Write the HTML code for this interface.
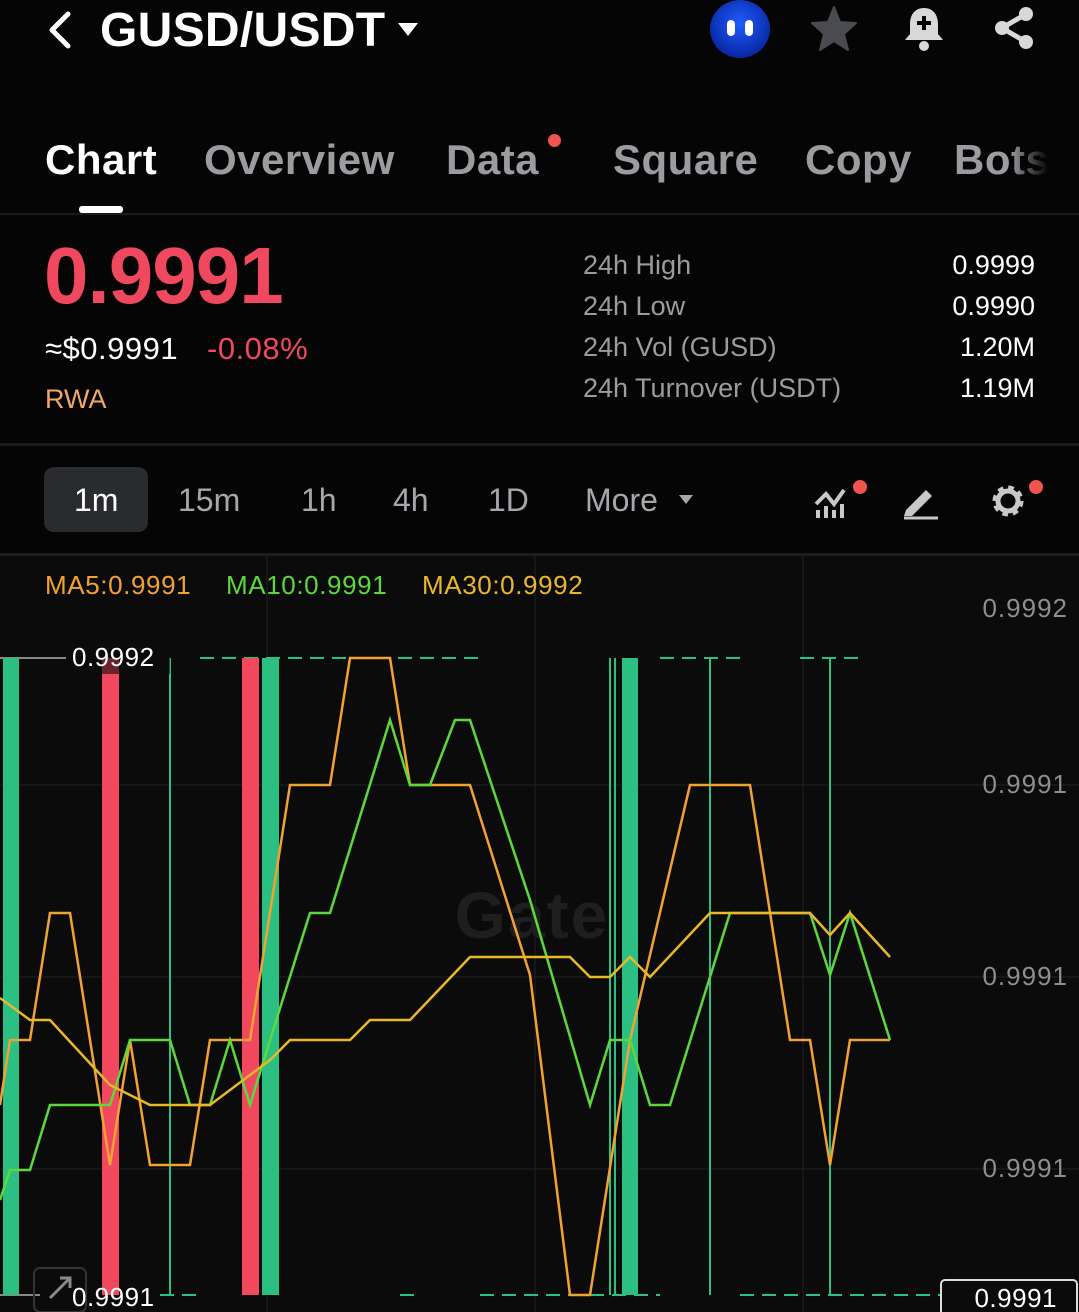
<!DOCTYPE html>
<html><head><meta charset="utf-8">
<style>
*{margin:0;padding:0;box-sizing:border-box}
body{width:1079px;height:1312px;background:#0b0b0b;font-family:"Liberation Sans",sans-serif;color:#fff;position:relative;overflow:hidden}
.a{position:absolute;white-space:nowrap}
.tab{font-size:42px;font-weight:bold;color:#9a9ca0;top:136px;letter-spacing:0.5px}
.stl{font-size:27px;color:#9a9ca0;left:583px}
.stv{font-size:27px;color:#fff;right:44px;text-align:right}
.tf{font-size:32px;color:#a5a7ab;top:482px}
</style></head><body>
<div style="position:absolute;left:0;top:0;width:1079px;height:555px;background:#050505"></div>
<svg class="a" style="left:44px;top:10px" width="30" height="40"><path d="M24 4 L8 20 L24 36" stroke="#fff" stroke-width="5" fill="none" stroke-linecap="round" stroke-linejoin="round"/></svg>
<div class="a" style="left:100px;top:3px;font-size:48px;font-weight:bold;letter-spacing:0.3px">GUSD/USDT</div>
<svg class="a" style="left:397px;top:22px" width="22" height="16"><path d="M1 1 L21 1 L11 14Z" fill="#fff"/></svg>
<div class="a" style="left:710px;top:0;width:60px;height:58px;border-radius:50%;background:radial-gradient(circle at 50% 40%,#1f5cff,#0a2aa8 70%,#0a1a60)"></div>
<div class="a" style="left:727px;top:20px;width:8px;height:16px;border-radius:4px;background:#fff"></div>
<div class="a" style="left:745px;top:20px;width:8px;height:16px;border-radius:4px;background:#fff"></div>
<svg class="a" style="left:810px;top:5px" width="48" height="46"><path d="M24 2 L30 17 L46 18 L34 29 L38 45 L24 36 L10 45 L14 29 L2 18 L18 17Z" fill="#4a4b50" stroke="#4a4b50" stroke-width="2" stroke-linejoin="round"/></svg>
<svg class="a" style="left:902px;top:4px" width="44" height="48"><path d="M22 4 C12 4 8 12 8 20 L8 30 L3 36 L41 36 L36 30 L36 20 C36 12 32 4 22 4Z" fill="#d8d8d8"/><circle cx="22" cy="42" r="5" fill="#d8d8d8"/><path d="M22 12 V26 M15 19 H29" stroke="#050505" stroke-width="4"/></svg>
<svg class="a" style="left:990px;top:4px" width="48" height="48"><path d="M36 10 L12 24 L36 38" stroke="#d8d8d8" stroke-width="5" fill="none"/><circle cx="36" cy="10" r="7" fill="#d8d8d8"/><circle cx="12" cy="24" r="7" fill="#d8d8d8"/><circle cx="36" cy="38" r="7" fill="#d8d8d8"/></svg>
<div class="a tab" style="left:45px;color:#fff">Chart</div>
<div class="a tab" style="left:204px">Overview</div>
<div class="a tab" style="left:446px">Data</div>
<div class="a" style="left:548px;top:134px;width:13px;height:13px;border-radius:50%;background:#f0544f"></div>
<div class="a tab" style="left:613px">Square</div>
<div class="a tab" style="left:805px">Copy</div>
<div class="a tab" style="left:954px">Bots</div>
<div class="a" style="left:1010px;top:120px;width:69px;height:80px;background:linear-gradient(90deg,rgba(5,5,5,0),#050505 55%)"></div>
<div class="a" style="left:79px;top:206px;width:44px;height:7px;border-radius:3px;background:#fff"></div>
<div class="a" style="left:0;top:213px;width:1079px;height:2px;background:#1a1b1d"></div>
<div class="a" style="left:44px;top:230px;font-size:80px;font-weight:bold;color:#f0485e;letter-spacing:-1px">0.9991</div>
<div class="a" style="left:45px;top:331px;font-size:31px;color:#fff;letter-spacing:0.5px">≈$0.9991</div>
<div class="a" style="left:207px;top:331px;font-size:31px;color:#f0485e;letter-spacing:0.5px">-0.08%</div>
<div class="a" style="left:45px;top:384px;font-size:27px;color:#f2a867">RWA</div>
<div class="a stl" style="top:250px">24h High</div><div class="a stv" style="top:250px">0.9999</div>
<div class="a stl" style="top:291px">24h Low</div><div class="a stv" style="top:291px">0.9990</div>
<div class="a stl" style="top:332px">24h Vol (GUSD)</div><div class="a stv" style="top:332px">1.20M</div>
<div class="a stl" style="top:373px">24h Turnover (USDT)</div><div class="a stv" style="top:373px">1.19M</div>
<div class="a" style="left:0;top:443px;width:1079px;height:3px;background:#1a1b1d"></div>
<div class="a" style="left:44px;top:467px;width:104px;height:65px;border-radius:10px;background:#2a2b2f"></div>
<div class="a tf" style="left:74px;color:#fff">1m</div>
<div class="a tf" style="left:178px">15m</div>
<div class="a tf" style="left:301px">1h</div>
<div class="a tf" style="left:393px">4h</div>
<div class="a tf" style="left:488px">1D</div>
<div class="a tf" style="left:585px">More</div>
<svg class="a" style="left:678px;top:494px" width="16" height="12"><path d="M1 1 L15 1 L8 10Z" fill="#a5a7ab"/></svg>
<svg class="a" style="left:812px;top:480px" width="44" height="40"><path d="M4 24 L14 14 L22 24 L32 10" stroke="#c8c8c8" stroke-width="4" fill="none"/><path d="M6 30 V38 M14 26 V38 M22 30 V38 M30 24 V38" stroke="#c8c8c8" stroke-width="4"/></svg>
<div class="a" style="left:853px;top:480px;width:14px;height:14px;border-radius:50%;background:#f0544f"></div>
<svg class="a" style="left:900px;top:482px" width="40" height="38"><path d="M6 28 L26 8 L32 14 L12 34 L4 34Z" fill="#c8c8c8"/><path d="M4 36 H38" stroke="#c8c8c8" stroke-width="3"/></svg>
<svg class="a" style="left:989px;top:482px" width="38" height="38"><circle cx="19" cy="19" r="12" fill="none" stroke="#c8c8c8" stroke-width="7" stroke-dasharray="5 4.4"/><circle cx="19" cy="19" r="10" fill="none" stroke="#c8c8c8" stroke-width="5"/></svg>
<div class="a" style="left:1029px;top:480px;width:14px;height:14px;border-radius:50%;background:#f0544f"></div>
<div class="a" style="left:0;top:553px;width:1079px;height:3px;background:#1c1d1f"></div>
<svg class="a" style="left:0;top:0" width="1079" height="1312">
<g stroke="#1a1b1d" stroke-width="1.5">
<line x1="267" y1="556" x2="267" y2="1312"/><line x1="535" y1="556" x2="535" y2="1312"/><line x1="803" y1="556" x2="803" y2="1312"/>
<line x1="0" y1="785" x2="1079" y2="785"/><line x1="0" y1="977" x2="1079" y2="977"/><line x1="0" y1="1169" x2="1079" y2="1169"/>
</g>
<text x="532" y="938" font-family="Liberation Sans" font-weight="bold" font-size="66" fill="#1e1e1f" text-anchor="middle" letter-spacing="2">Gate</text>
<g stroke="#2bbf82" stroke-width="2" stroke-dasharray="14 8">
<line x1="200" y1="658" x2="480" y2="658"/><line x1="660" y1="658" x2="740" y2="658"/><line x1="800" y1="658" x2="860" y2="658"/>
<line x1="160" y1="1295" x2="200" y2="1295"/><line x1="400" y1="1295" x2="420" y2="1295"/><line x1="480" y1="1295" x2="660" y2="1295"/><line x1="740" y1="1295" x2="940" y2="1295"/>
</g>
<line x1="0" y1="658" x2="66" y2="658" stroke="#888" stroke-width="2"/>
<line x1="0" y1="1295" x2="40" y2="1295" stroke="#888" stroke-width="2"/>
<g stroke="#2bbf82" stroke-width="2">
<line x1="170" y1="658" x2="170" y2="1295"/><line x1="610" y1="658" x2="610" y2="1295"/><line x1="615" y1="658" x2="615" y2="1295"/><line x1="710" y1="658" x2="710" y2="1295"/><line x1="830" y1="658" x2="830" y2="1295"/>
</g>
<rect x="3" y="658" width="16" height="637" fill="#2bbf82"/>
<rect x="102" y="658" width="17" height="637" fill="#f2485e"/>
<rect x="242" y="658" width="17" height="637" fill="#f2485e"/>
<rect x="262" y="658" width="17" height="637" fill="#2bbf82"/>
<rect x="622" y="658" width="16" height="637" fill="#2bbf82"/>
<polyline fill="none" stroke="#f2a233" stroke-width="2.5" points="0,1105 10,1040 30,1040 50,913 70,913 90,1040 110,1165 130,1040 150,1165 190,1165 210,1040 250,1040 290,785 330,785 350,658 390,658 410,785 470,785 530,975 570,1295 590,1295 630,1040 690,785 750,785 790,1040 810,1040 830,1165 850,1040 890,1040"/>
<polyline fill="none" stroke="#5dd83a" stroke-width="2.5" points="0,1200 10,1170 30,1170 50,1105 110,1105 130,1040 170,1040 190,1105 210,1105 230,1040 250,1105 270,1040 310,913 330,913 390,720 410,785 430,785 455,720 470,720 530,900 590,1105 610,1040 630,1040 650,1105 670,1105 730,913 810,913 830,975 850,913 890,1040"/>
<polyline fill="none" stroke="#e8b82a" stroke-width="2.5" points="0,998 30,1020 50,1020 110,1085 150,1105 210,1105 270,1060 290,1040 350,1040 370,1020 410,1020 470,957 570,957 590,977 610,977 630,957 650,977 710,913 810,913 830,935 850,913 890,957"/>
<rect x="70" y="642" width="100" height="32" fill="#0b0b0b" opacity="0.6"/>
<text x="72" y="666" font-family="Liberation Sans" font-size="26" fill="#fff" letter-spacing="0.5">0.9992</text>
<rect x="34" y="1268" width="52" height="44" rx="6" fill="none" stroke="#333" stroke-width="2"/>
<path d="M50 1298 L70 1278 M60 1278 H70 V1288" stroke="#888" stroke-width="3" fill="none"/>
<text x="72" y="1306" font-family="Liberation Sans" font-size="26" fill="#fff" letter-spacing="0.5">0.9991</text>
<rect x="941" y="1280" width="136" height="40" rx="4" fill="#0b0b0b" stroke="#ddd" stroke-width="2"/>
<text x="1057" y="1307" font-family="Liberation Sans" font-size="26" fill="#fff" text-anchor="end" letter-spacing="0.5">0.9991</text>
<g font-family="Liberation Sans" font-size="26" fill="#8c8e92" text-anchor="end" letter-spacing="1">
<text x="1068" y="617">0.9992</text><text x="1068" y="793">0.9991</text><text x="1068" y="985">0.9991</text><text x="1068" y="1177">0.9991</text>
</g>
<g font-family="Liberation Sans" font-size="26" letter-spacing="0.6">
<text x="45" y="594" fill="#f2a233">MA5:0.9991</text>
<text x="226" y="594" fill="#5dd83a">MA10:0.9991</text>
<text x="422" y="594" fill="#e8b82a">MA30:0.9992</text>
</g>
</svg>
</body></html>
